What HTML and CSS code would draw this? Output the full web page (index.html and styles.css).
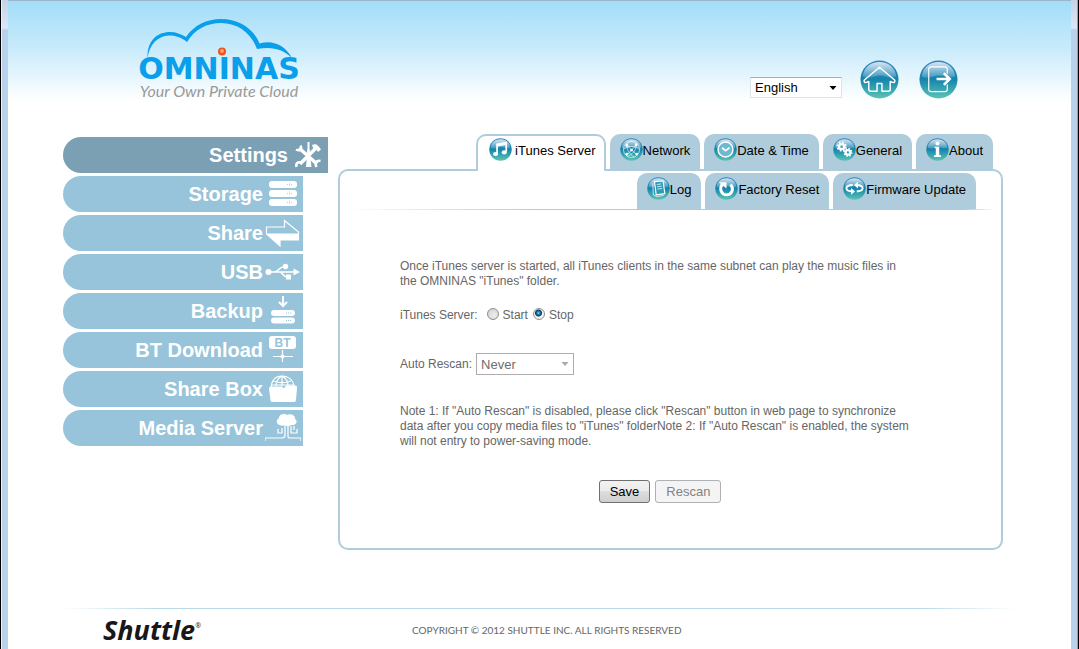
FILE: index.html
```html
<!DOCTYPE html>
<html lang="en">
<head>
<meta charset="utf-8">
<title>OMNINAS - iTunes Server</title>
<link rel="stylesheet" href="styles.css">
</head>
<body>
<svg class="defs" aria-hidden="true">
  <defs>
    <linearGradient id="orb-fill" x1="0" y1="0" x2="0" y2="1">
      <stop offset="0" stop-color="#2f86c0"/>
      <stop offset=".5" stop-color="#1585ad"/>
      <stop offset="1" stop-color="#5cc4b4"/>
    </linearGradient>
    <linearGradient id="orb-shine" x1="0" y1="0" x2="0" y2="1">
      <stop offset="0" stop-color="#fff" stop-opacity=".8"/>
      <stop offset="1" stop-color="#fff" stop-opacity=".15"/>
    </linearGradient>
    <symbol id="orb" viewBox="0 0 40 40">
      <circle cx="20" cy="20" r="19.5" fill="url(#orb-fill)"/>
      <path d="M3 17C3 8 11 2 20 2s17 6 17 15c-8 3-12-2-18-1S9 20 3 17z" fill="url(#orb-shine)"/>
    </symbol>
  </defs>
</svg>
<div class="window">
  <div class="edge edge-left"></div>
  <div class="page">
    <header class="header">
      <div class="logo">
        <svg class="cloud" viewBox="0 0 164 44" aria-hidden="true">
          <path d="M10.500 40C10 23 20 14 33 14c6 0 11 2 16 5C57 7 70 1 84 1c18 0 33 10 38.500 24.500C136 21 149 28 155 40c-9-9-20-12-35-9C114 15 101 5 84 5 70 5 58 11 50 24 44 19 38 17.500 32 17.500 20 18 12.500 27 10.500 40z" fill="#0a9fea"/>
          <circle cx="85" cy="33.500" r="4" fill="#e8541c"/><circle cx="85" cy="33" r="2" fill="#ffa070"/>
        </svg>
        <div class="wordmark">OMNINAS</div>
        <div class="tagline">Your Own Private Cloud</div>
      </div>
      <div class="tools">
        <select class="language" aria-label="Language"><option>English</option></select>
        <a class="orb-link" href="#" aria-label="Home"><svg viewBox="0 0 40 40"><use href="#orb"/><path d="M20 7.500L4.500 20.500c-1 1.500.5 3 2 2.500L9 22v8c0 1.500.5 2 2 2h6.500v-8h5v8H29c1.500 0 2-.5 2-2v-8l2.500 1c1.500.5 3-1 2-2.500z" fill="none" stroke="#fff" stroke-width="1.500" stroke-linejoin="round"/></svg></a>
        <a class="orb-link" href="#" aria-label="Log out"><svg viewBox="0 0 40 40"><use href="#orb"/><path d="M29 14V9.500c0-1.500-1-2.500-2.500-2.500h-14C11 7 10 8 10 9.500V30c0 1.500 1 2.500 2.500 2.500h14c1.500 0 2.500-1 2.500-2.500v-5" fill="none" stroke="#fff" stroke-width="1.200"/><path d="M18 19.500h13M25.500 13.500l6 6-6 6" fill="none" stroke="#fff" stroke-width="2.600"/></svg></a>
      </div>
    </header>

    <div class="main">
      <nav class="sidebar">
        <a class="item current" href="#">Settings
          <svg viewBox="0 0 36 30"><path d="M9 8l18 16M27 7L10 24" stroke="#fff" stroke-width="3.500"/><path d="M18.500 2v14" stroke="#fff" stroke-width="2"/><path d="M17.500 9h2l2 18h-5.500z" fill="#fff"/><path d="M10.500 5.500c2 4-1 6-4.500 4M6.500 27c-1-4 2-6 5-4M30.500 21c-4-1-6 2-4 6" fill="none" stroke="#fff" stroke-width="2.500"/><path d="M22 5c4-2 6 0 9 4.500L28 12l-2-3-2 1.500z" fill="#fff"/></svg></a>
        <a class="item" href="#">Storage
          <svg viewBox="0 0 36 30"><g fill="#fff"><rect x="4" y="2" width="28" height="7" rx="3"/><rect x="4" y="11" width="28" height="7" rx="3"/><rect x="4" y="20" width="28" height="7" rx="3"/></g><path d="M22 5.500h5M24.500 3.500v4M22 14.500h5M24.500 12.500v4M22 23.500h5M24.500 21.500v4" stroke="#97c4da" stroke-dasharray="1 1" opacity=".7"/></svg></a>
        <a class="item" href="#">Share
          <svg viewBox="0 0 36 30"><path d="M1.500 9h18V2.500L33.500 14v8H15v6L1.500 16z" fill="none" stroke="#fff" stroke-width="1.200"/><path d="M1.500 15.500h32V22H15v6.500z" fill="#fff"/></svg></a>
        <a class="item" href="#">USB
          <svg viewBox="0 0 36 30"><g fill="none" stroke="#fff" stroke-width="1.700"><path d="M4 15h27M9 15c5 0 5-5 9-5h3M14 15c4 0 4 5 8 5h2"/></g><g fill="#fff"><circle cx="3.500" cy="15" r="3"/><circle cx="20.500" cy="9.500" r="2.700"/><path d="M21 17.500h5v5h-5zM28.500 11.500L35 15l-6.500 3.500z"/></g></svg></a>
        <a class="item" href="#">Backup
          <svg viewBox="0 0 36 30"><path d="M18 0v9M14 6l4 4 4-4" fill="none" stroke="#fff" stroke-width="2"/><g fill="#fff"><rect x="6" y="14" width="24" height="6" rx="3"/><rect x="6" y="21.500" width="24" height="6" rx="3"/></g><path d="M21 17h5M21 24.500h5" stroke="#97c4da" stroke-dasharray="1 1"/></svg></a>
        <a class="item" href="#">BT Download
          <svg viewBox="0 0 36 30"><rect x="4" y="1" width="27" height="13" rx="3" fill="#fff"/><text class="bt" x="17.500" y="11.500" text-anchor="middle">BT</text><path d="M8 21.500h20M17.500 15v12" stroke="#fff" stroke-width="1.200"/><circle cx="17.500" cy="21.500" r="2" fill="#fff"/></svg></a>
        <a class="item" href="#">Share Box
          <svg viewBox="0 0 36 30"><g fill="none" stroke="#fff" stroke-width="1.200"><path d="M6 13C7 5 12 2 17 2s11 3 12 10M8 7c6 2 13 2 18 0M6.500 11h22M17 2v10M17 2c-4 2-6 6-6 10M17 2c4 2 6 6 6 10"/></g><path d="M4 15c0-2 1-2.500 2.500-2.500H17l2 2 2-3h9c1.500 0 2.500 1 2 3l-1 11c0 2-1 2.500-2.500 2.500h-21C6 28 5.500 27 5.500 26z" fill="#fff"/></svg></a>
        <a class="item" href="#">Media Server
          <svg viewBox="0 0 36 30"><path d="M15 12c-3 0-5-5-1-7 0-4 6-5 8-3 4-2 9 1 8 4 4 3 0 7-4 6-3 2-5 1-6 0-2 1-4 1-5 0z" fill="#fff"/><g fill="none" stroke="#fff" stroke-width="1.200"><path d="M20 11v11q0 3-3 3H0M23 11v12q0 2 2 2h11v3M17 15v5h-4v-4M26 13v7h6v-4M29 13v4M0 25v3"/></g></svg></a>
      </nav>

      <section class="content">
        <nav class="tabs">
          <a class="tab active" href="#"><svg viewBox="0 0 40 40"><use href="#orb"/><path d="M14 27V11l16-3v16" fill="none" stroke="#fff" stroke-width="3"/><path d="M14 13l16-3" stroke="#fff" stroke-width="4"/><ellipse cx="11.500" cy="28" rx="4.500" ry="3.500" fill="#fff"/><ellipse cx="26.500" cy="25" rx="4.500" ry="3.500" fill="#fff"/></svg>iTunes Server</a>
          <a class="tab" href="#"><svg viewBox="0 0 40 40"><use href="#orb"/><g fill="none" stroke="#fff" stroke-width="1.300" opacity=".85"><circle cx="20" cy="20" r="14"/><path d="M10 11l20 19M30 10L11 31M6 20c8-7 20-7 28 0M13 8c-3 9 2 20 12 25M27 8c3 8-1 19-14 24"/></g><g fill="#fff" opacity=".9"><circle cx="12" cy="13" r="2.500"/><circle cx="28" cy="12" r="2.500"/><circle cx="20" cy="21" r="2.500"/><circle cx="29" cy="28" r="2.500"/><circle cx="12" cy="28" r="2.500"/></g></svg>Network</a>
          <a class="tab" href="#"><svg viewBox="0 0 40 40"><use href="#orb"/><circle cx="20" cy="20" r="13" fill="#6db9cf" stroke="#fff" stroke-width="2.500"/><path d="M14 17l6 5 7-5" fill="none" stroke="#fff" stroke-width="3"/></svg>Date &amp; Time</a>
          <a class="tab" href="#"><svg viewBox="0 0 40 40"><use href="#orb"/><g fill="none" stroke="#fff"><circle cx="15" cy="15" r="4.500" stroke-width="4"/><circle cx="15" cy="15" r="7.500" stroke-width="3" stroke-dasharray="3 2.900"/><circle cx="26" cy="25" r="4" stroke-width="4"/><circle cx="26" cy="25" r="6.500" stroke-width="3" stroke-dasharray="2.500 2.600"/></g></svg>General</a>
          <a class="tab" href="#"><svg viewBox="0 0 40 40"><use href="#orb"/><circle cx="20" cy="9.500" r="3.500" fill="#fff"/><path d="M15 15h8v15h3v3H14v-3h3V18h-2z" fill="#fff"/></svg>About</a>
        </nav>
        <div class="panel">
          <nav class="subtabs">
            <a class="tab" href="#"><svg viewBox="0 0 40 40"><use href="#orb"/><path d="M13 8l15-1 3 22-15 2z" fill="#2c9ab9" stroke="#fff" stroke-width="2"/><path d="M17 13l8-1M17.500 17l8-1M18 21l8-1M10 11l1 20 6 3 12-2" fill="none" stroke="#fff" stroke-width="1.300"/></svg>Log</a>
            <a class="tab" href="#"><svg viewBox="0 0 40 40"><use href="#orb"/><path d="M13 12c-7 9-1 19 7 19 9 0 14-10 7-18" fill="none" stroke="#fff" stroke-width="5"/><path d="M7 9h13v11z" fill="#fff"/></svg>Factory Reset</a>
            <a class="tab" href="#"><svg viewBox="0 0 40 40"><use href="#orb"/><path d="M17 14c-8 0-12 3-11 6.500 1 3 5 4.500 10 4.500M23 14c8 0 12 3 11 6.500-1 3-5 4.500-10 4.500" fill="none" stroke="#fff" stroke-width="3.500"/><path d="M14 19l7 6-7 6zM26 8l-7 6 7 6z" fill="#fff"/></svg>Firmware Update</a>
          </nav>
          <form class="form">
            <p class="text">Once iTunes server is started, all iTunes clients in the same subnet can play the music files in the OMNINAS "iTunes" folder.</p>
            <div class="row server" role="radiogroup" aria-labelledby="server-label">
              <span class="row-label" id="server-label">iTunes Server:</span>
              <label class="choice"><input type="radio" name="server">Start</label>
              <label class="choice"><input type="radio" name="server" checked>Stop</label>
            </div>
            <div class="row rescan">
              <label for="rescan">Auto Rescan:</label>
              <select id="rescan" class="interval" disabled><option>Never</option></select>
            </div>
            <p class="text">Note 1: If "Auto Rescan" is disabled, please click "Rescan" button in web page to synchronize data after you copy media files to "iTunes" folderNote 2: If "Auto Rescan" is enabled, the system will not entry to power-saving mode.</p>
            <div class="actions">
              <button class="button" type="button">Save</button>
              <button class="button" type="button" disabled>Rescan</button>
            </div>
          </form>
        </div>
      </section>
    </div>

    <footer class="footer">
      <div class="brand">Shuttle<sup>®</sup></div>
      <div class="copyright">COPYRIGHT © 2012 SHUTTLE INC. ALL RIGHTS RESERVED</div>
    </footer>
  </div>
  <div class="edge edge-right"></div>
</div>
</body>
</html>
```
FILE: styles.css
```css
* { box-sizing: border-box; }
body {
  margin: 0;
  background: #fff;
  color: #666;
  font: 12px/15px "Liberation Sans", Arial, sans-serif;
}
a { color: inherit; text-decoration: none; }
svg { display: block; flex: none; }
.defs { position: absolute; width: 0; height: 0; }

.window { display: flex; min-height: 100vh; }
.edge {
  flex: none;
  width: 8px;
  background: linear-gradient(#c6d3e6, #dbe7f6 28px, #b9d1ea 30px);
}
.edge-left { border-left: 1px solid #000; box-shadow: inset 1px 0 #e8f2fa; }
.edge-right { border-right: 1px solid #000; box-shadow: inset -1px 0 #35c4ee; }
.page {
  flex: 1;
  min-width: 0;
  border-top: 1px solid #9db6cc;
  background: linear-gradient(#a2ddf8, #c9ebfb 48px, #fff 100px);
}

.header {
  display: flex;
  justify-content: space-between;
  align-items: flex-end;
  height: 98px;
  padding: 0 113px 0 129px;
}
.logo { width: 164px; white-space: nowrap; }
.cloud { width: 164px; height: 44px; margin-bottom: -7px; }
.wordmark {
  display: flex;
  justify-content: center;
  color: #0a9fea;
  font: bold 30px/28px "DejaVu Sans", sans-serif;
}
.tagline {
  display: flex;
  justify-content: center;
  color: #999;
  font: italic 16px/16px Lato, sans-serif;
}
.tools { display: flex; align-items: flex-end; }
.language {
  appearance: none;
  width: 92px;
  height: 21px;
  margin: 0 18px 1px 0;
  padding: 0 4px;
  border: 1px solid #e0e3ea;
  border-top-color: #abadb3;
  background: #fff url("data:image/svg+xml,%3Csvg xmlns='http://www.w3.org/2000/svg' viewBox='0 0 7 4'%3E%3Cpath d='M0 0h7L3.500 4z'/%3E%3C/svg%3E") no-repeat right 4px center / 8px 4px;
  color: #000;
  font: 13px "Liberation Sans", Arial, sans-serif;
}
.orb-link + .orb-link { margin-left: 20px; }
.orb-link svg { width: 39px; height: 39px; }

.main { display: flex; gap: 10px; padding: 35px 68px 0 55px; }
.sidebar {
  display: flex;
  flex: none;
  flex-direction: column;
  gap: 3px;
  width: 265px;
  padding-top: 3px;
}
.item {
  display: flex;
  justify-content: flex-end;
  align-items: center;
  gap: 2px;
  width: 240px;
  height: 36px;
  padding-right: 2px;
  border-radius: 18px 0 0 18px;
  background: #97c4da;
  color: #fff;
  font-size: 20px;
  font-weight: bold;
  white-space: nowrap;
}
.item svg { width: 36px; height: 30px; }
.item.current { width: 265px; background: #7b9fb3; }
.bt { fill: #97c4da; font: bold 12px "Liberation Sans", Arial, sans-serif; }

.content { flex: 1; min-width: 0; }
.tabs, .subtabs { display: flex; justify-content: flex-end; gap: 4px; }
.tabs { position: relative; margin-bottom: -2px; padding-right: 10px; }
.tab {
  display: flex;
  align-items: center;
  height: 37px;
  padding: 0 10px 5px 10px;
  border-radius: 10px 10px 0 0;
  background: #aeccdb;
  color: #000;
  font-size: 13px;
  white-space: nowrap;
}
.tab svg { width: 23px; height: 23px; margin-top: -2px; }
.tab.active {
  gap: 3px;
  padding: 0 8px 7px 11px;
  border: 2px solid #aeccdb;
  border-bottom: 0;
  background: #fff;
}
.panel {
  padding: 2px 5px 45px;
  border: 2px solid #aeccdb;
  border-radius: 10px;
}
.subtabs {
  padding: 0 20px 1px 0;
  background: linear-gradient(90deg, #fff, #aeccdb 30%, #aeccdb 95%, #fff) bottom / 100% 1px no-repeat;
}
.subtabs .tab { height: 36px; padding: 0 10px 4px; }

.form { max-width: 575px; padding: 49px 0 0 55px; }
.text { max-width: 518px; margin: 0; }
.text:first-child { max-width: 514px; }
.row { display: flex; align-items: center; }
.server { height: 24px; margin-top: 14px; }
.row-label { margin-right: 9px; }
.choice { display: flex; align-items: center; gap: 4px; margin-right: 5px; }
.choice input {
  appearance: none;
  width: 12px;
  height: 12px;
  margin: -2px 0 0;
  border: 1px solid #8e8f8f;
  border-radius: 50%;
  background: radial-gradient(circle at 60% 60%, #eee, #c9cdd0);
}
.choice input:checked { background: radial-gradient(circle at 45% 40%, #7fd4f4 0, #116a9c 2px, #0a3558 3px, #f2f2f2 4px); }
.rescan { gap: 4px; margin: 26px 0 29px; }
.interval {
  appearance: none;
  width: 98px;
  height: 22px;
  padding: 0 4px;
  border: 1px solid #adadad;
  border-radius: 0;
  background: #fff url("data:image/svg+xml,%3Csvg xmlns='http://www.w3.org/2000/svg' viewBox='0 0 7 4'%3E%3Cpath fill='%23aaa' d='M0 0h7L3.500 4z'/%3E%3C/svg%3E") no-repeat right 4px center / 8px 4px;
  color: #6d6d6d;
  opacity: 1;
  font: 13px "Liberation Sans", Arial, sans-serif;
}
.actions { display: flex; justify-content: center; gap: 5px; margin-top: 31px; }
.button {
  height: 23px;
  padding: 0 10px;
  border: 1px solid #707070;
  border-radius: 3px;
  background: linear-gradient(#f2f2f2, #ebebeb 50%, #ddd 50%, #cfcfcf);
  color: #000;
  font: 13px "Liberation Sans", Arial, sans-serif;
}
.button:disabled { border-color: #adb2b5; background: #f4f4f4; color: #838383; }

.footer {
  display: grid;
  grid-template-columns: 309px 1fr;
  align-items: center;
  margin: 58px 55px 0;
  padding: 6px 0 0 40px;
  background: linear-gradient(90deg, #fff, #b9d8e8 10%, #b9d8e8 90%, #fff) top / 100% 1px no-repeat;
}
.brand { color: #1a1718; font: italic bold 27px/32px "Open Sans", sans-serif; }
.brand sup { font-size: 7px; font-weight: normal; line-height: 0; vertical-align: 12px; }
.copyright { color: #666; font: 10px/15px Lato, sans-serif; white-space: nowrap; }
```
